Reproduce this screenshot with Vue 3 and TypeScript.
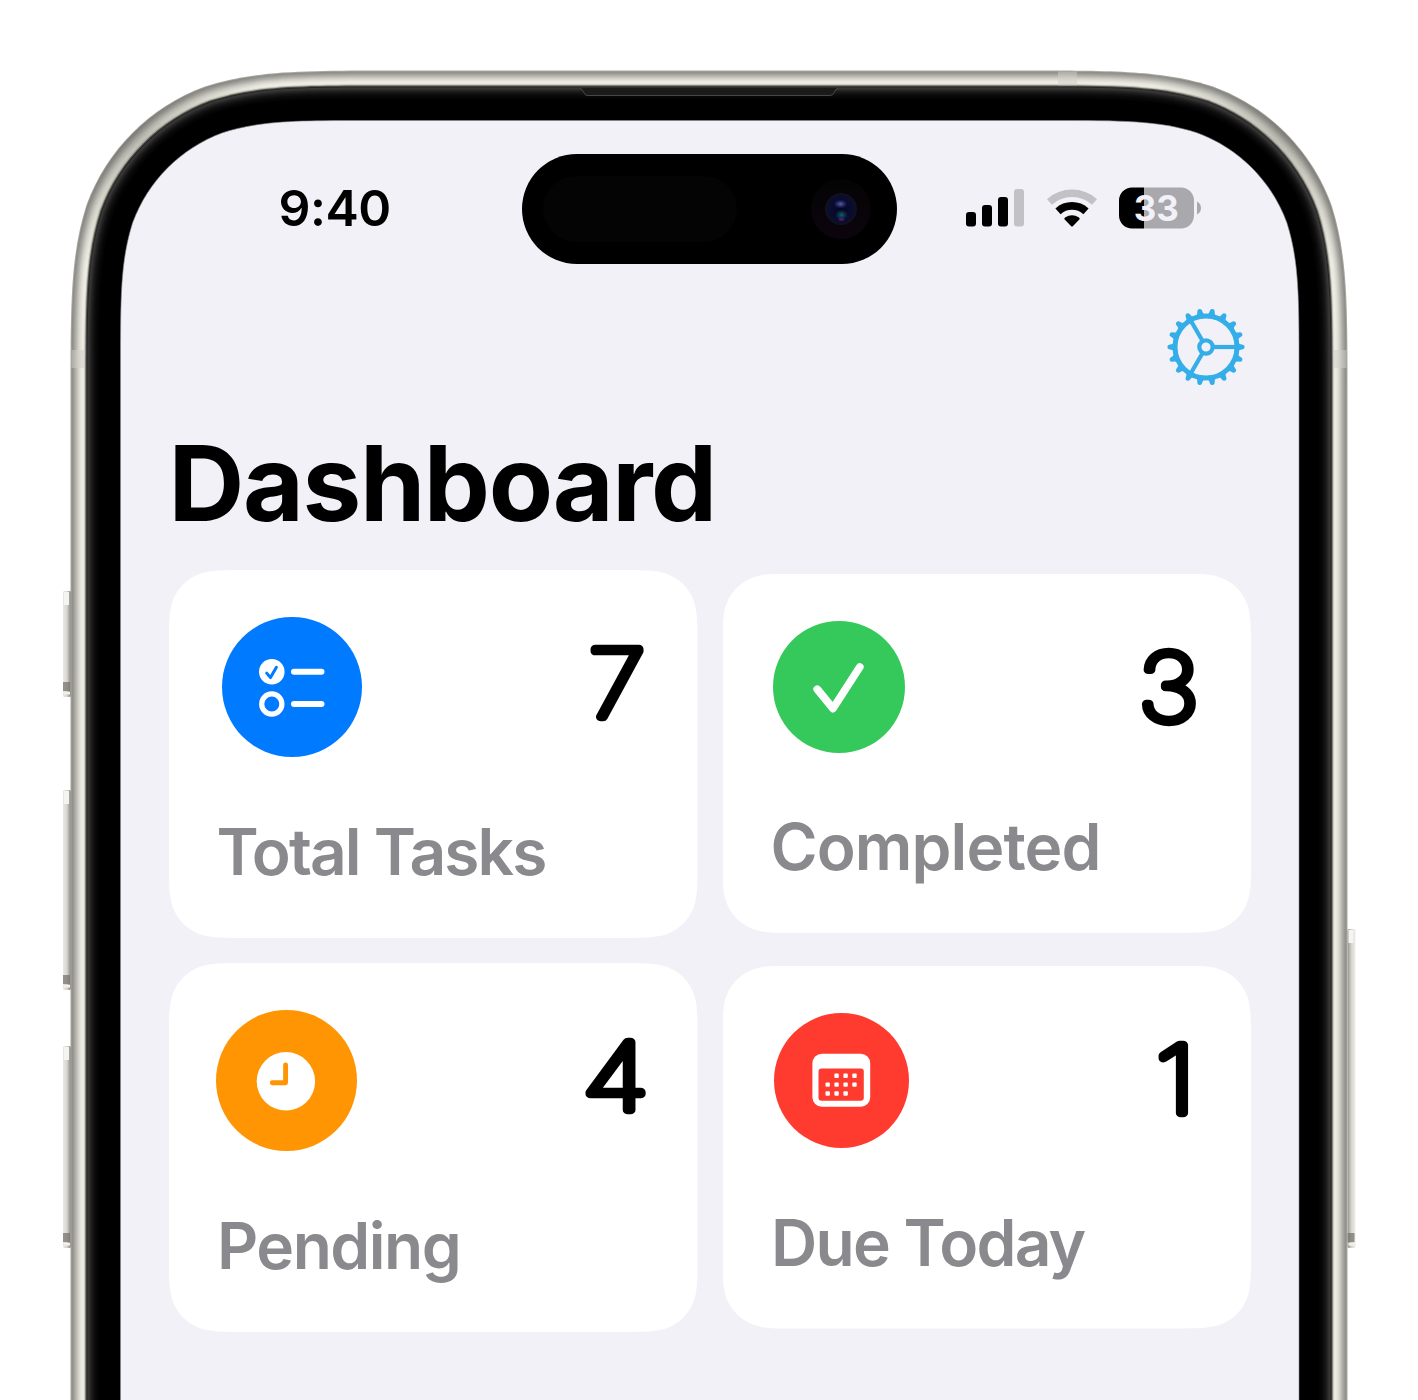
<script setup lang="ts">
type CardKind = 'total' | 'completed' | 'pending' | 'due'

interface Card {
  kind: CardKind
  label: string
  value: number
  height: number
  size: number
}

const columns: Card[][] = [
  [
    { kind: 'total', label: 'Total Tasks', value: 7, height: 368, size: 140 },
    { kind: 'pending', label: 'Pending', value: 4, height: 369, size: 141 },
  ],
  [
    { kind: 'completed', label: 'Completed', value: 3, height: 359.5, size: 132 },
    { kind: 'due', label: 'Due Today', value: 1, height: 363, size: 135 },
  ],
]

/* Rectangle with continuous-curvature corners. */
function smoothRect(x: number, y: number, w: number, h: number, r: number): string {
  const a = 1.528 * r, b = 1.0884 * r, c = 0.8684 * r, d = 0.6315 * r
  const e = 0.3728 * r, f = 0.1691 * r, g = 0.0749 * r
  const R = x + w, B = y + h
  return [
    `M${x + a} ${y}L${R - a} ${y}`,
    `C${R - b} ${y} ${R - c} ${y} ${R - d} ${y + g}`,
    `C${R - e} ${y + f} ${R - f} ${y + e} ${R - g} ${y + d}`,
    `C${R} ${y + c} ${R} ${y + b} ${R} ${y + a}`,
    `L${R} ${B - a}`,
    `C${R} ${B - b} ${R} ${B - c} ${R - g} ${B - d}`,
    `C${R - f} ${B - e} ${R - e} ${B - f} ${R - d} ${B - g}`,
    `C${R - c} ${B} ${R - b} ${B} ${R - a} ${B}`,
    `L${x + a} ${B}`,
    `C${x + b} ${B} ${x + c} ${B} ${x + d} ${B - g}`,
    `C${x + e} ${B - f} ${x + f} ${B - e} ${x + g} ${B - d}`,
    `C${x} ${B - c} ${x} ${B - b} ${x} ${B - a}`,
    `L${x} ${y + a}`,
    `C${x} ${y + b} ${x} ${y + c} ${x + g} ${y + d}`,
    `C${x + f} ${y + e} ${x + e} ${y + f} ${x + d} ${y + g}`,
    `C${x + c} ${y} ${x + b} ${y} ${x + a} ${y}Z`,
  ].join('')
}

function bezel(inset: number): string {
  return smoothRect(70.5 + inset, 70.5 + inset, 1277 - inset * 2, 2400, 213 - inset)
}

/* Shades of the phone body, one per pixel from the outer edge inwards. */
const shades = [
  '#a8a7a1', '#8e8d88', '#969590', '#a09f9a', '#aaa9a3', '#b4b3ad', '#c1c0b9', '#cdccc4',
  '#d6d5cd', '#dfded5', '#e6e5dc', '#ebeae0', '#eeede3', '#e6e5db', '#b4b3aa', '#55544d',
  '#262625', '#393939', '#343434', '#2a2a2a', '#222222', '#1b1b1b', '#151515', '#101010',
  '#0c0c0c', '#090909', '#070707', '#050505', '#030303', '#000000',
]
const rings = shades.map((fill, i) => ({ fill, d: bezel(i) }))
const screenPath = smoothRect(120.5, 120.5, 1178.5, 2400, 162)

const teeth = Array.from({ length: 18 }, (_, i) => i * 20)
const dots = [
  [62.6, 62.8], [71.6, 62.8], [80.5, 62.8],
  [53.7, 71.6], [62.6, 71.6], [71.6, 71.6], [80.5, 71.6],
  [53.7, 80.5], [62.6, 80.5], [71.6, 80.5],
]
const sideButtons = [
  { x: 63, y: 591, h: 106, side: 'left' },
  { x: 63, y: 790, h: 200, side: 'left' },
  { x: 63, y: 1046, h: 202, side: 'left' },
  { x: 1347.5, y: 929, h: 319, side: 'right' },
]

function cardStyle(card: Card) {
  return {
    height: `${card.height}px`,
    clipPath: `path('${smoothRect(0, 0, 528.5, card.height, 49)}')`,
  }
}
</script>

<template>
  <div class="stage">
    <svg class="phone" width="1418" height="1400" viewBox="0 0 1418 1400" aria-hidden="true">
      <defs>
        <linearGradient id="btn-left" x1="0" x2="1" y1="0" y2="0">
          <stop offset="0" stop-color="#e9e9e5" />
          <stop offset=".5" stop-color="#d6d5cf" />
          <stop offset="1" stop-color="#85837d" />
        </linearGradient>
        <linearGradient id="btn-right" x1="1" x2="0" y1="0" y2="0">
          <stop offset="0" stop-color="#efeeea" />
          <stop offset=".5" stop-color="#d6d5cf" />
          <stop offset="1" stop-color="#96948e" />
        </linearGradient>
        <radialGradient id="shade-l" gradientUnits="userSpaceOnUse" cx="132" cy="132" r="140">
          <stop offset="0" stop-color="#5c5a54" stop-opacity=".34" />
          <stop offset="1" stop-color="#5c5a54" stop-opacity="0" />
        </radialGradient>
        <radialGradient id="shade-r" gradientUnits="userSpaceOnUse" cx="1286" cy="132" r="140">
          <stop offset="0" stop-color="#5c5a54" stop-opacity=".34" />
          <stop offset="1" stop-color="#5c5a54" stop-opacity="0" />
        </radialGradient>
      </defs>
      <g v-for="b in sideButtons" :key="b.y">
        <rect :x="b.x" :y="b.y" width="8" :height="b.h" rx="1.5" :fill="`url(#btn-${b.side})`" />
        <rect :x="b.x + 1" :y="b.y + 1" width="5" height="13" fill="#f4f4f0" />
        <rect :x="b.x" :y="b.y + b.h - 15" width="7" height="9" fill="#77746d" opacity=".75" />
        <rect :x="b.x + 1" :y="b.y + b.h - 5" width="6" height="2.5" fill="#f1f0ec" />
      </g>
      <path v-for="(ring, i) in rings" :key="i" :d="ring.d" :fill="ring.fill" />
      <path :d="bezel(7.5)" fill="none" stroke="url(#shade-l)" stroke-width="14" />
      <path :d="bezel(7.5)" fill="none" stroke="url(#shade-r)" stroke-width="14" />
      <g fill="#cfcec8" opacity=".5">
        <rect x="1058" y="71.5" width="19" height="14" />
        <rect x="71.5" y="350" width="13.5" height="18" />
        <rect x="1333" y="350" width="13.5" height="18" />
      </g>
      <path d="M580 88Q582.500 88.500 583.500 92T587 96H830Q833.500 95.500 834.500 92T838 88Z" fill="#1b1b1b" />
      <path d="M580 88.500Q582.500 89 583.500 92T587 95.500H830Q833.500 95.500 834.500 92T838 88.500" fill="none" stroke="#474747" stroke-width="1" />
      <path :d="screenPath" fill="#f2f1f7" stroke="#8c8b91" stroke-width=".6" />
    </svg>

    <main class="screen">
      <header class="status">
        <time class="clock">9:40</time>
        <svg class="island" width="375" height="110" viewBox="0 0 375 110" aria-hidden="true">
          <defs>
            <radialGradient id="lens">
              <stop offset="0" stop-color="#05071a" />
              <stop offset=".5" stop-color="#080a30" />
              <stop offset=".75" stop-color="#0a0d2c" />
              <stop offset="1" stop-color="#10121f" />
            </radialGradient>
            <radialGradient id="glint">
              <stop offset="0" stop-color="#5a62b4" />
              <stop offset="1" stop-color="#363c86" stop-opacity="0" />
            </radialGradient>
            <radialGradient id="teal">
              <stop offset="0" stop-color="#0d6470" />
              <stop offset="1" stop-color="#0b4a59" stop-opacity="0" />
            </radialGradient>
            <linearGradient id="cam" x1="0" x2="0" y1="0" y2="1">
              <stop offset="0" stop-color="#040404" />
              <stop offset="1" stop-color="#0c040d" />
            </linearGradient>
          </defs>
          <rect width="375" height="110" rx="55" />
          <rect x="21" y="22" width="194" height="66" rx="33" fill="#040404" />
          <circle cx="319" cy="55" r="30" fill="url(#cam)" />
          <circle cx="319" cy="55" r="16" fill="url(#lens)" />
          <ellipse cx="318.500" cy="50" rx="7" ry="4.500" fill="url(#glint)" />
          <ellipse cx="319.500" cy="61" rx="6.500" ry="5.500" fill="url(#teal)" />
          <ellipse cx="319.500" cy="65.500" rx="3" ry="1.400" fill="#5a1a6c" opacity=".85" />
        </svg>
        <div class="indicators">
          <svg class="signal" width="58" height="38" viewBox="0 0 58 38" aria-hidden="true">
            <rect x="0" y="23" width="10" height="14.500" rx="3" />
            <rect x="16" y="16" width="10" height="21.500" rx="3" />
            <rect x="32" y="8" width="10" height="29.500" rx="3" />
            <rect x="48" y="0" width="10" height="37.500" rx="3" fill="#c2c1c6" />
          </svg>
          <svg class="wifi" width="52" height="38" viewBox="-26 -38 52 38" aria-hidden="true">
            <path d="M-22.500 -25.100A33.700 33.700 0 0 1 22.500 -25.100" fill="none" stroke="#c2c1c6" stroke-width="7.400" />
            <path d="M-14 -15.700A21 21 0 0 1 14 -15.700" fill="none" stroke="#000" stroke-width="7.800" />
            <path d="M-7.300 -7.500Q-8.200 -8.600 -7 -9.500A12.500 12.500 0 0 1 7 -9.500Q8.200 -8.600 7.300 -7.500L.8 -.8Q0 0 -.8 -.8Z" />
          </svg>
          <svg class="battery" width="83" height="42" viewBox="0 0 83 42">
            <path d="M13 .5H62A13 13 0 0 1 75 13.500V28.500A13 13 0 0 1 62 41.500H25V.5Z" fill="#a9a8ad" />
            <path d="M25 .5H13A13 13 0 0 0 0 13.500V28.500A13 13 0 0 0 13 41.500H25Z" />
            <path d="M78 14.500Q82 16.500 82 21T78 27.500Z" fill="#a9a8ad" />
            <text x="37.300" y="33.600" text-anchor="middle" class="charge">33</text>
          </svg>
        </div>
      </header>

      <nav class="toolbar">
        <svg width="78" height="78" viewBox="-39 -39 78 78" aria-label="Settings" role="img">
          <g fill="#34aee8">
            <path
              v-for="angle in teeth"
              :key="angle"
              :transform="`rotate(${angle})`"
              d="M31.500 -4.600Q33.600 -2.600 36.800 -2.300Q38.600 -2 38.600 0T36.800 2.300Q33.600 2.600 31.500 4.600Z"
            />
          </g>
          <g fill="none" stroke="#34aee8">
            <circle r="31" stroke-width="5" />
            <circle r="6.700" stroke-width="4.200" />
            <path
              v-for="angle in [0, 120, 240]"
              :key="angle"
              :transform="`rotate(${angle})`"
              d="M8 0H30"
              stroke-width="4.200"
            />
          </g>
        </svg>
      </nav>

      <h1 class="title">Dashboard</h1>

      <section class="board">
        <div v-for="(column, c) in columns" :key="c" class="column">
          <article v-for="card in column" :key="card.kind" :class="['card', card.kind]" :style="cardStyle(card)">
            <div class="top">
              <svg
                class="icon"
                :width="card.size"
                :height="card.size"
                :viewBox="`0 0 ${card.size} ${card.size}`"
                aria-hidden="true"
              >
                <circle class="disc" :cx="card.size / 2" :cy="card.size / 2" :r="card.size / 2" />
                <template v-if="card.kind === 'total'">
                  <circle cx="49.800" cy="54.700" r="12.800" fill="#fff" />
                  <path d="M44.700 56.100L48.500 60.600L54.400 50.200" fill="none" stroke="#007aff" stroke-width="3" stroke-linecap="round" stroke-linejoin="round" />
                  <circle cx="49.800" cy="87" r="10.100" fill="none" stroke="#fff" stroke-width="5.200" />
                  <path d="M72 54.700H99.500M72 87H99.500" stroke="#fff" stroke-width="6" stroke-linecap="round" />
                </template>
                <path
                  v-else-if="card.kind === 'completed'"
                  d="M44.300 68.300L60 87.500L86.800 46"
                  fill="none"
                  stroke="#fff"
                  stroke-width="7.800"
                  stroke-linecap="round"
                  stroke-linejoin="round"
                />
                <template v-else-if="card.kind === 'pending'">
                  <circle cx="69.900" cy="71.300" r="29.200" fill="#fff" />
                  <path d="M69.600 55V72.700H56.300" fill="none" stroke="#ff9503" stroke-width="4.900" stroke-linecap="round" stroke-linejoin="round" />
                </template>
                <template v-else>
                  <rect x="38.400" y="40.800" width="57.800" height="53" rx="9.500" fill="#fff" />
                  <rect class="disc" x="44.500" y="55.500" width="45.300" height="32.300" rx="3" />
                  <rect
                    v-for="([x, y], i) in dots"
                    :key="i"
                    :x="x - 2.200"
                    :y="y - 2.200"
                    width="4.400"
                    height="4.400"
                    rx="1"
                    fill="#fff"
                  />
                </template>
              </svg>
              <svg class="value" width="80" height="100" viewBox="0 0 80 100">
                <text x="0" y="84" text-anchor="middle">{{ card.value }}</text>
              </svg>
            </div>
            <p class="label">{{ card.label }}</p>
          </article>
        </div>
      </section>
    </main>
  </div>
</template>

<style>
body {
  margin: 0;
  background: #fff;
}
</style>

<style scoped>
.stage {
  position: relative;
  box-sizing: border-box;
  width: 1418px;
  height: 1400px;
  padding: 120px 119px 0 120px;
  overflow: hidden;
  background: #fff;
  color: #000;
  font-family: Inter, 'Liberation Sans', sans-serif;
}
.phone {
  position: absolute;
  top: 0;
  left: 0;
}
.screen {
  position: relative;
  display: flex;
  flex-direction: column;
}
.screen svg {
  display: block;
  flex: none;
}
.status {
  display: flex;
  align-items: flex-start;
  height: 154px;
}
.clock {
  width: 243.500px;
  margin: 58px 0 0 158.500px;
  font-size: 50px;
  font-weight: 600;
  line-height: 60px;
  letter-spacing: -0.5px;
}
.island {
  margin-top: 34px;
}
.indicators {
  display: flex;
  align-items: flex-start;
  margin: 67px 0 0 69px;
}
.signal {
  margin-top: 2px;
}
.wifi {
  margin: 1.500px 21px 0 21.500px;
}
.charge {
  fill: #f2f1f7;
  font-size: 35px;
  font-weight: 700;
}
.toolbar {
  display: flex;
  justify-content: flex-end;
  padding: 34px 54px 0 0;
}
.title {
  margin: 29px 0 0 48.500px;
  font-size: 105px;
  font-weight: 700;
  line-height: 135px;
  letter-spacing: -1.400px;
  white-space: nowrap;
}
.board {
  display: flex;
  gap: 25px;
  margin: 20px 0 0 49px;
}
.column {
  display: flex;
  flex-direction: column;
  gap: 25px;
  width: 528.500px;
}
.column + .column {
  gap: 32.500px;
  padding-top: 3.500px;
}
.card {
  box-sizing: border-box;
  padding: 47px 0 0 49px;
  background: #fff;
}
.top {
  display: flex;
  justify-content: space-between;
  padding-right: 40px;
}
.total .icon { margin-left: 4px; }
.pending .icon { margin-left: -2px; }
.completed .icon { margin-left: 1px; }
.due .icon { margin-left: 2.500px; }
.total .disc { fill: #007aff; }
.pending .disc { fill: #ff9503; }
.completed .disc { fill: #35c85a; }
.due .disc { fill: #ff3b30; }
.value {
  overflow: visible;
  margin-top: 16px;
}
.value text {
  fill: #000;
  stroke: #000;
  stroke-width: 8.500px;
  stroke-linejoin: round;
  stroke-linecap: round;
  font-size: 94px;
  font-weight: 100;
  transform: translateX(39px) scaleX(1.1);
}
.completed .value text { transform: translateX(37.500px) scaleX(1.1); }
.pending .value text { transform: translateX(37.500px) scaleX(1.19); }
.due .value text { transform: translateX(44.500px) scaleX(1.15); }
.label {
  margin: 56px 0 0 -1.500px;
  color: #8a8a8e;
  font-size: 64px;
  font-weight: 600;
  line-height: 78px;
  letter-spacing: -1.500px;
  white-space: nowrap;
}
.total .label { letter-spacing: -1.900px; }
.completed .label { margin: 55px 0 0 -1px; letter-spacing: -0.900px; }
.pending .label { margin: 55.500px 0 0 -1px; }
.due .label { margin: 56px 0 0 -0.500px; letter-spacing: -1.700px; }
</style>
